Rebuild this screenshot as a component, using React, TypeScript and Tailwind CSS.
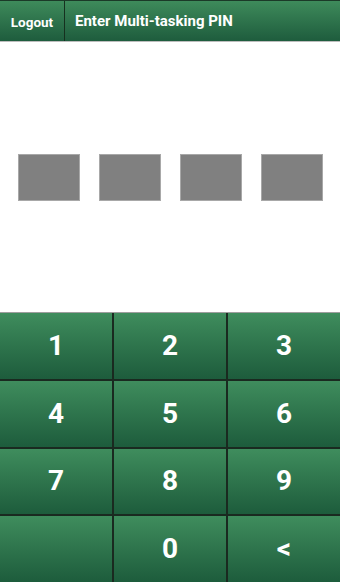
import React from "react";

const keys = ["1", "2", "3", "4", "5", "6", "7", "8", "9", "", "0", "<"];

export default function App() {
  return (
    <div
      className="w-[340px] h-[582px] flex flex-col bg-white overflow-hidden"
      style={{ fontFamily: "Roboto, 'Noto Sans', sans-serif" }}
    >
      <div className="h-[42px] flex border-t border-[#1b3a28] border-b border-b-[#bdbdbd] bg-gradient-to-b from-[#3e8b5b] to-[#1e5c3d]">
        <div className="w-[65px] flex items-center justify-center pt-[3px] text-white font-bold text-[13.5px] border-r border-[#16301f]">
          Logout
        </div>
        <div className="flex-1 flex items-center pt-[1px] pl-[10px] text-white font-bold text-[15px]">
          Enter Multi-tasking PIN
        </div>
      </div>
      <div className="flex-1 flex items-center justify-center gap-[19px]">
        {[0, 1, 2, 3].map((i) => (
          <div
            key={i}
            className="w-[62px] h-[47px] bg-[#808080] border border-[#a8a8a8]"
          />
        ))}
      </div>
      <div className="h-[270px] border-t border-[#9e9e9e] grid grid-cols-3 grid-rows-4 gap-[2px] bg-[#1a2a20]">
        {keys.map((k, i) => (
          <div
            key={i}
            className="flex items-center justify-center text-white font-bold text-[28px] bg-gradient-to-b from-[#3f8d5d] to-[#1d5c3c]"
          >
            {k}
          </div>
        ))}
      </div>
    </div>
  );
}
